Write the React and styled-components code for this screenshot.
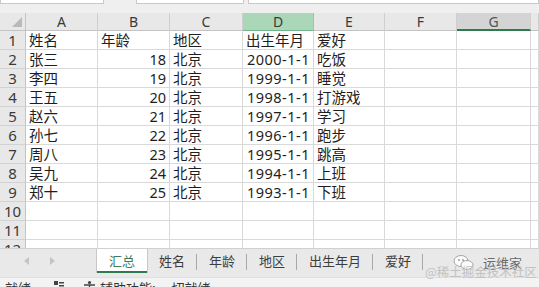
import React from "react";
import styled, { createGlobalStyle } from "styled-components";

const Global = createGlobalStyle`
  html, body { margin: 0; padding: 0; background: #ececec; }
  body { font-family: "Noto Sans", "Noto Sans CJK SC", sans-serif; }
  * { box-sizing: border-box; }
`;

const Page = styled.div`
  width: 539px;
  height: 287px;
  overflow: hidden;
  display: flex;
  flex-direction: column;
  background: #ededed;
  position: relative;
`;

const TopStrip = styled.div`
  height: 13px;
  display: flex;
  gap: 4px;
  align-items: flex-start;
  background: #efefef;
`;

const TopBox = styled.div`
  height: 4px;
  width: ${(p) => p.$w}px;
  margin-left: ${(p) => p.$ml || 0}px;
  background: #fff;
  border: 1px solid #c9c9c9;
  border-top: none;
`;

const Sheet = styled.div`
  height: 235px;
  overflow: hidden;
  display: grid;
  grid-template-columns: 26px 72px 72px 73px 71px 71px 72px 74px 1fr;
  grid-auto-rows: 19px;
  grid-template-rows: 18px;
  background: #fff;
`;

const ColHead = styled.div`
  background: ${(p) => (p.$state === "sel" ? "#a9d7b8" : p.$state === "act" ? "#d4d4d4" : "#e8e8e8")};
  border-right: 1px solid ${(p) => (p.$state === "sel" ? "#95c9a6" : "#cfcfcf")};
  border-bottom: ${(p) => (p.$state === "act" ? "2px solid #2f7a4f" : p.$state === "sel" ? "1px solid #6fb48a" : "1px solid #c4c4c4")};
  color: ${(p) => (p.$state === "act" ? "#555" : "#3a3a3a")};
  font-size: 14px;
  line-height: 18px;
  text-align: center;
  font-family: "Noto Sans", sans-serif;
`;

const Corner = styled.div`
  background: #e8e8e8;
  border-right: 1px solid #c4c4c4;
  border-bottom: 1px solid #c4c4c4;
  display: flex;
  align-items: flex-end;
  justify-content: flex-end;
  padding: 0 3px 3px 0;
`;

const RowHead = styled.div`
  background: #e8e8e8;
  border-right: 1px solid #c4c4c4;
  border-bottom: 1px solid #d2d2d2;
  color: #3a3a3a;
  font-size: 15px;
  line-height: 19px;
  text-align: center;
  font-family: "Noto Sans", sans-serif;
`;

const Cell = styled.div`
  border-right: 1px solid #d9d9d9;
  border-bottom: 1px solid #d9d9d9;
  color: #1e1e1e;
  font-size: 14.5px;
  line-height: 19px;
  letter-spacing: ${(p) => (p.$date ? "0.5px" : "0")};
  padding: 0 ${(p) => (p.$num ? "3px" : "2px")} 0 ${(p) => (p.$num ? "0" : "3px")};
  text-align: ${(p) => (p.$num ? "right" : "left")};
  white-space: nowrap;
  font-family: "Noto Sans", "Noto Sans CJK SC", sans-serif;
`;

const TabBar = styled.div`
  height: 29px;
  display: flex;
  align-items: flex-start;
  background: #e9e9e9;
  border-top: 1px solid #d0d0d0;
  position: relative;
`;

const Nav = styled.div`
  width: 97px;
  height: 24px;
  display: flex;
  align-items: center;
  gap: 21px;
  padding-left: 24px;
`;

const Arrow = styled.span`
  width: 0;
  height: 0;
  border-top: 4px solid transparent;
  border-bottom: 4px solid transparent;
  ${(p) => (p.$dir === "left" ? "border-right: 5px solid #c4c4c4;" : "border-left: 5px solid #c4c4c4;")}
`;

const Tab = styled.div`
  height: 24px;
  padding: 0 12px;
  display: flex;
  align-items: center;
  font-size: 13px;
  font-family: "Noto Sans CJK SC", sans-serif;
  color: ${(p) => (p.$active ? "#3f7d5a" : "#3d3d3d")};
  background: ${(p) => (p.$active ? "#ffffff" : "transparent")};
  border-bottom: ${(p) => (p.$active ? "2px solid #2f7a4f" : "2px solid transparent")};
  box-shadow: ${(p) => (p.$active ? "1px 0 0 #c8c8c8, -1px 0 0 #c8c8c8" : "none")};
  position: relative;
  &::after {
    content: "";
    display: ${(p) => (p.$sep ? "block" : "none")};
    position: absolute;
    right: 0;
    top: 5px;
    width: 1px;
    height: 16px;
    background: #a8a8a8;
  }
`;

const StatusBar = styled.div`
  height: 10px;
  overflow: hidden;
  display: flex;
  align-items: flex-start;
  padding-left: 5px;
  background: #f3f3f3;
  border-top: 1px solid #e0e0e0;
  font-size: 13px;
  color: #333;
  font-family: "Noto Sans CJK SC", sans-serif;
`;

const StatusText = styled.span`
  line-height: 20px;
  margin-left: ${(p) => p.$ml || 0}px;
  white-space: nowrap;
`;

const StatusIcon = styled.svg`
  margin-left: ${(p) => p.$ml || 0}px;
  margin-top: 2px;
  flex: none;
`;

const Watermark = styled.div`
  position: absolute;
  left: 425px;
  top: 253px;
  width: 114px;
  height: 24px;
  pointer-events: none;
`;

const WmBrand = styled.div`
  position: absolute;
  left: 28px;
  top: 0;
  display: flex;
  align-items: center;
  gap: 8px;
  font-size: 13px;
  color: #555;
  font-family: "Noto Sans CJK SC", sans-serif;
  opacity: 0.85;
`;

const WmSite = styled.div`
  position: absolute;
  left: 0;
  top: 9px;
  font-size: 12.5px;
  color: #c2c2c2;
  font-family: "Noto Sans CJK SC", sans-serif;
  white-space: nowrap;
`;

const rows = [
  ["姓名", "年龄", "地区", "出生年月", "爱好"],
  ["张三", "18", "北京", "2000-1-1", "吃饭"],
  ["李四", "19", "北京", "1999-1-1", "睡觉"],
  ["王五", "20", "北京", "1998-1-1", "打游戏"],
  ["赵六", "21", "北京", "1997-1-1", "学习"],
  ["孙七", "22", "北京", "1996-1-1", "跑步"],
  ["周八", "23", "北京", "1995-1-1", "跳高"],
  ["吴九", "24", "北京", "1994-1-1", "上班"],
  ["郑十", "25", "北京", "1993-1-1", "下班"],
  ["", "", "", "", ""],
  ["", "", "", "", ""],
  ["", "", "", "", ""],
];

const cols = ["A", "B", "C", "D", "E", "F", "G"];
const tabs = ["汇总", "姓名", "年龄", "地区", "出生年月", "爱好"];

export default function App() {
  return (
    <Page>
      <Global />
      <TopStrip>
        <TopBox $w={104} />
        <TopBox $w={108} $ml={28} />
        <TopBox $w={291} />
      </TopStrip>
      <Sheet>
        <Corner>
          <svg width="10" height="10" viewBox="0 0 10 10">
            <polygon points="10,0 10,10 0,10" fill="#b9b9b9" />
          </svg>
        </Corner>
        {cols.map((c) => (
          <ColHead key={c} $state={c === "D" ? "sel" : c === "G" ? "act" : ""}>
            {c}
          </ColHead>
        ))}
        <ColHead />
        {rows.map((r, i) => (
          <React.Fragment key={i}>
            <RowHead>{i + 1}</RowHead>
            <Cell>{r[0]}</Cell>
            <Cell $num={i > 0}>{r[1]}</Cell>
            <Cell>{r[2]}</Cell>
            <Cell $num={i > 0} $date={i > 0}>{r[3]}</Cell>
            <Cell>{r[4]}</Cell>
            <Cell />
            <Cell />
            <Cell />
          </React.Fragment>
        ))}
      </Sheet>
      <TabBar>
        <Nav>
          <Arrow $dir="left" />
          <Arrow $dir="right" />
        </Nav>
        {tabs.map((t, i) => (
          <Tab key={t} $active={i === 0} $sep={i > 0}>
            {t}
          </Tab>
        ))}
      </TabBar>
      <StatusBar>
        <StatusText>就绪</StatusText>
        <StatusIcon $ml={22} width="12" height="12" viewBox="0 0 12 12">
          <rect x="1" y="1" width="4" height="4" fill="#444" />
          <rect x="6" y="2" width="5" height="1.5" fill="#444" />
          <rect x="6" y="5" width="5" height="1.5" fill="#444" />
        </StatusIcon>
        <StatusIcon $ml={18} width="13" height="13" viewBox="0 0 13 13">
          <circle cx="6.5" cy="2.5" r="1.6" fill="#444" />
          <path d="M1 5 H12 M6.5 5 V9 L4 13 M6.5 9 L9 13" stroke="#444" strokeWidth="1.3" fill="none" />
        </StatusIcon>
        <StatusText $ml={4}>辅助功能: 一切就绪</StatusText>
      </StatusBar>
      <Watermark>
        <WmBrand>
          <svg width="22" height="18" viewBox="0 0 22 18">
            <ellipse cx="8" cy="7" rx="7" ry="5.5" fill="#fff" stroke="#9a9a9a" strokeWidth="1" />
            <ellipse cx="14" cy="11" rx="6" ry="4.5" fill="#fff" stroke="#9a9a9a" strokeWidth="1" />
            <circle cx="6" cy="6" r="0.9" fill="#888" />
            <circle cx="10" cy="6" r="0.9" fill="#888" />
          </svg>
          <span>运维家</span>
        </WmBrand>
        <WmSite>@稀土掘金技术社区</WmSite>
      </Watermark>
    </Page>
  );
}
